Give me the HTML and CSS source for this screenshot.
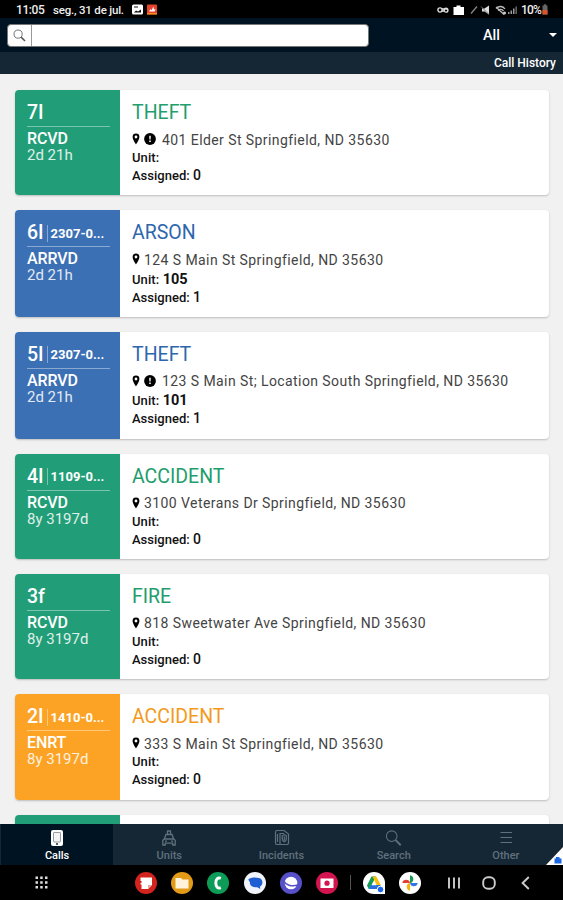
FILE: index.html
```html
<!DOCTYPE html>
<html lang="en">
<head>
    <meta charset="UTF-8">
    <meta name="viewport" content="width=device-width, initial-scale=1.0">
    <title>Calls</title>
    <link rel="stylesheet" href="styles.css">
</head>
<body>
    <!-- Shared icons -->
    <svg class="sprite">
        <symbol id="pin" viewBox="0 0 8 12">
            <path fill-rule="evenodd" d="M4 .5A3.4 3.4 0 0 0 .6 3.9C.6 6.4 4 11.3 4 11.3S7.4 6.4 7.4 3.9A3.4 3.4 0 0 0 4 .5zM4 2.6a1.4 1.4 0 1 1 0 2.8 1.4 1.4 0 0 1 0-2.8z"/>
        </symbol>
        <symbol id="alert" viewBox="0 0 12 12">
            <circle cx="6" cy="6" r="5.9"/>
            <path fill="#fff" d="M5.200 2.800h1.600l-.2 3.700H5.400zM5.200 7.500h1.600v1.400H5.200z"/>
        </symbol>
        <symbol id="magnifier" viewBox="0 0 16 16">
            <g fill="none" stroke="currentColor">
                <circle cx="6.3" cy="6.3" r="5"/>
                <path stroke-width="1.8" d="M10 10l4.8 4.8"/>
            </g>
        </symbol>
    </svg>

    <div class="screen">
        <div class="status-bar">
            <span class="clock">11:05</span>
            <span class="date">seg., 31 de jul.</span>
            <svg class="status-left" width="26" height="11" viewBox="0 0 26 11">
                <rect x="0" y=".5" width="11" height="10" rx="1.5" fill="#fff"/>
                <path d="M2 8.500l2-2 2 1 3-2V8.500z" fill="#111"/>
                <path d="M2 2.500h4v1H2z" fill="#111"/>
                <rect x="15" y=".5" width="10" height="10" rx="1" fill="#e8412c"/>
                <path d="M17 7.600l1.500-2.600 1.200 1.200 1.600-3.700.8 3 1.500-.5-1 2.600z" fill="#fff"/>
                <path d="M15 9h10v1.500H15z" fill="#f58a1f"/>
            </svg>
            <svg class="status-right" width="82" height="12" viewBox="0 0 82 12">
                <g fill="none" stroke="#ddd" stroke-width="1.400">
                    <circle cx="3" cy="6" r="2.100"/>
                    <path d="M5 5h5M5 7h2.500"/>
                    <circle cx="9" cy="6.200" r="1.900"/>
                </g>
                <path d="M17 3h2.500V1.400h4V3H27v8H16.500V3z" fill="#fff"/>
                <path d="M34 9.500l6-7" stroke="#888" stroke-width="1.300"/>
                <path d="M45 4.500h2.500l4.500-3v9l-4.500-3H45z" fill="#ddd"/>
                <path d="M44 2.500l8 8" stroke="#777"/>
                <path d="M59 4.500c3-3 7-2.500 9 .5M61 6.500c1.500-1.500 4-1.500 5.500.5M59 3l8 7.500" stroke="#bbb" stroke-width="1.300" fill="none"/>
                <circle cx="67.500" cy="9" r="1.500" fill="#ccc"/>
                <path d="M71 10V8h1.500v2zM73.500 10V6.500H75V10zM76 10V4.500h1.500V10z" fill="#999"/>
                <path d="M78.500 10V2.500h1.300V10z" fill="#777"/>
            </svg>
            <span class="percent">10%</span>
            <svg width="6" height="11" viewBox="0 0 6 11">
                <path d="M.5 1.500h1.300V.3h2.400v1.200h1.300V10.500H.5z" fill="#666"/>
                <path d="M.5 6h5v4.500h-5z" fill="#d9532c"/>
            </svg>
        </div>

        <header class="header">
            <div class="search-box">
                <span class="search-icon"><svg width="13" height="13"><use href="#magnifier"/></svg></span>
            </div>
            <span class="filter">All</span>
            <span class="caret"></span>
        </header>
        <div class="sub-header">Call History</div>

        <main class="calls">
            <article class="card green">
                <div class="side">
                    <div class="number"><b>7I</b></div>
                    <div class="state">RCVD</div>
                    <div class="age">2d 21h</div>
                </div>
                <div class="info">
                    <h2>THEFT</h2>
                    <p class="address"><svg class="pin"><use href="#pin"/></svg><svg class="alert"><use href="#alert"/></svg><span>401 Elder St Springfield, ND 35630</span></p>
                    <p class="unit">Unit:</p>
                    <p class="assigned">Assigned: <b>0</b></p>
                </div>
            </article>

            <article class="card blue">
                <div class="side">
                    <div class="number"><b>6I</b><span>2307-0...</span></div>
                    <div class="state">ARRVD</div>
                    <div class="age">2d 21h</div>
                </div>
                <div class="info">
                    <h2>ARSON</h2>
                    <p class="address"><svg class="pin"><use href="#pin"/></svg><span>124 S Main St Springfield, ND 35630</span></p>
                    <p class="unit">Unit: <b>105</b></p>
                    <p class="assigned">Assigned: <b>1</b></p>
                </div>
            </article>

            <article class="card blue">
                <div class="side">
                    <div class="number"><b>5I</b><span>2307-0...</span></div>
                    <div class="state">ARRVD</div>
                    <div class="age">2d 21h</div>
                </div>
                <div class="info">
                    <h2>THEFT</h2>
                    <p class="address"><svg class="pin"><use href="#pin"/></svg><svg class="alert"><use href="#alert"/></svg><span>123 S Main St; Location South Springfield, ND 35630</span></p>
                    <p class="unit">Unit: <b>101</b></p>
                    <p class="assigned">Assigned: <b>1</b></p>
                </div>
            </article>

            <article class="card green">
                <div class="side">
                    <div class="number"><b>4I</b><span>1109-0...</span></div>
                    <div class="state">RCVD</div>
                    <div class="age">8y 3197d</div>
                </div>
                <div class="info">
                    <h2>ACCIDENT</h2>
                    <p class="address"><svg class="pin"><use href="#pin"/></svg><span>3100 Veterans Dr Springfield, ND 35630</span></p>
                    <p class="unit">Unit:</p>
                    <p class="assigned">Assigned: <b>0</b></p>
                </div>
            </article>

            <article class="card green">
                <div class="side">
                    <div class="number"><b>3f</b></div>
                    <div class="state">RCVD</div>
                    <div class="age">8y 3197d</div>
                </div>
                <div class="info">
                    <h2>FIRE</h2>
                    <p class="address"><svg class="pin"><use href="#pin"/></svg><span>818 Sweetwater Ave Springfield, ND 35630</span></p>
                    <p class="unit">Unit:</p>
                    <p class="assigned">Assigned: <b>0</b></p>
                </div>
            </article>

            <article class="card orange">
                <div class="side">
                    <div class="number"><b>2I</b><span>1410-0...</span></div>
                    <div class="state">ENRT</div>
                    <div class="age">8y 3197d</div>
                </div>
                <div class="info">
                    <h2>ACCIDENT</h2>
                    <p class="address"><svg class="pin"><use href="#pin"/></svg><span>333 S Main St Springfield, ND 35630</span></p>
                    <p class="unit">Unit:</p>
                    <p class="assigned">Assigned: <b>0</b></p>
                </div>
            </article>

            <article class="card green">
                <div class="side"></div>
                <div class="info"></div>
            </article>
        </main>

        <nav class="tabs">
            <a class="tab active">
                <svg width="18" height="18" viewBox="0 0 18 18">
                    <rect x="3" y="1" width="12" height="16" rx="2" fill="#fff"/>
                    <rect x="5.500" y="3.500" width="7" height="9.500" rx=".5" fill="#f4f4f4" stroke="#8a9299" stroke-width=".9"/>
                    <circle cx="9" cy="15" r=".9" fill="#001322"/>
                </svg>
                <span>Calls</span>
            </a>
            <a class="tab">
                <svg width="18" height="18" viewBox="0 0 18 18" fill="none" stroke="currentColor" stroke-width="1.300">
                    <path d="M7.500 5V2h3v3M6 5.500h6l1.700 4.500 1.500 1.200v4.800h-2.500v-1.800H5.300V16H2.800v-4.800L4.300 10zM4.300 10h9.400"/>
                    <path d="M5 12.200h2M11 12.200h2"/>
                </svg>
                <span>Units</span>
            </a>
            <a class="tab">
                <svg width="18" height="18" viewBox="0 0 18 18" fill="none" stroke="currentColor" stroke-width="1.200">
                    <path d="M7 15.500H4a1.500 1.500 0 0 1-1.500-1.500V3A1.500 1.500 0 0 1 4 1.500h7L15.500 5v9a1.500 1.500 0 0 1-1.500 1.500H7V4.500h4"/>
                    <path d="M9.300 6.500c1 0 1.500-.3 2-.8.500.5 1 .8 2 .8v3.500c0 1.500-1 2.300-2 2.800-1-.5-2-1.300-2-2.800zM11.300 7.500v4M4.500 5v8"/>
                </svg>
                <span>Incidents</span>
            </a>
            <a class="tab">
                <svg width="17" height="18" viewBox="0 0 16 16"><use href="#magnifier"/></svg>
                <span>Search</span>
            </a>
            <a class="tab">
                <svg width="18" height="18" viewBox="0 0 18 18">
                    <path d="M3.500 3.500h11.500M3.500 8.500h11.500M3.500 13.500h11.500" stroke="currentColor" stroke-width="1.200"/>
                </svg>
                <span>Other</span>
            </a>
            <svg class="corner" width="17" height="18" viewBox="0 0 17 18">
                <path d="M17 0v18H0z" fill="#fff"/>
                <path d="M8.500 11.500H10V10h3.500v1.500H15.500V16.500h-7z" fill="#1e66e0"/>
            </svg>
        </nav>

        <!-- System navigation -->
        <div class="system-bar">
            <svg class="grid" width="13" height="13" viewBox="0 0 13 13" fill="#ddd">
                <path d="M.5.500h2.500V3H.5zM5.200.500h2.500V3H5.200zM10 .5h2.500V3H10zM.5 5.200h2.500v2.500H.5zM5.200 5.200h2.500v2.500H5.200zM10 5.200h2.500v2.500H10zM.5 10h2.500v2.500H.5zM5.200 10h2.500v2.500H5.200zM10 10h2.500v2.500H10z"/>
            </svg>
            <svg class="app" viewBox="0 0 22 22">
                <circle cx="11" cy="11" r="11" fill="#d2231f"/>
                <path d="M5.500 5.500h11.500v7.500l-4 4H6.500v-4.500h-1v-1.500h1V9h-1z" fill="#fff"/>
                <path d="M13 17v-4h4z" fill="#e9a5a3"/>
            </svg>
            <svg class="app" viewBox="0 0 22 22">
                <circle cx="11" cy="11" r="11" fill="#e39a17"/>
                <path d="M4.500 6h5.500l1.500 1.500h6V16.500h-13z" fill="#fff3dc"/>
            </svg>
            <svg class="app" viewBox="0 0 22 22">
                <circle cx="11" cy="11" r="11" fill="#0c9c57"/>
                <path d="M13.800 6.300C10.800 5 8.800 7.500 8.800 11s2 6 5 4.700" fill="none" stroke="#fff" stroke-width="2.900"/>
            </svg>
            <svg class="app" viewBox="0 0 22 22">
                <circle cx="11" cy="11" r="11" fill="#f1f4fb"/>
                <path d="M4.300 7.500C7 4.800 15.500 5 17.500 7.500c2 3 .5 6-1.500 7l.3 2.500-3-1.700C8 15.500 5.500 13.500 6 10.500z" fill="#1f5fd3"/>
            </svg>
            <svg class="app" viewBox="0 0 22 22">
                <circle cx="11" cy="11" r="11" fill="#5750c9"/>
                <circle cx="11" cy="11" r="6.300" fill="#fff"/>
                <path d="M3.500 8.500c2 4.500 8 6.500 14.500 4.500" fill="none" stroke="#5750c9" stroke-width="1.600"/>
            </svg>
            <svg class="app" viewBox="0 0 22 22">
                <circle cx="11" cy="11" r="11" fill="#d3144f"/>
                <path d="M4.500 6.500h13v9.500h-13z" fill="#fff"/>
                <circle cx="11" cy="11.200" r="2.600" fill="#d3144f"/>
            </svg>
            <span class="divider"></span>
            <svg class="app" viewBox="0 0 22 22">
                <path d="M11 0a11 11 0 0 1 11 11v11H11A11 11 0 0 1 11 0z" fill="#fff"/>
                <path d="M8.500 4.500h4.500L8 14l-2.300 3L4 13.500z" fill="#139b51"/>
                <path d="M9.500 4.500h3.800l4.500 8.500h-4.200z" fill="#fbbc0a"/>
                <path d="M8 13h9.800l-2.300 4H5.700z" fill="#2670e0"/>
                <path d="M11 9.500l2.300 3.700H8.800z" fill="#fff"/>
                <circle cx="17.500" cy="17.500" r="3.300" fill="#1c67e8" stroke="#fff"/>
            </svg>
            <svg class="app" viewBox="0 0 22 22">
                <circle cx="11" cy="11" r="11" fill="#fff"/>
                <path d="M11 11V3.300a3.900 3.900 0 0 1 0 7.700z" fill="#1a9a50"/>
                <path d="M11 11h7.700a3.900 3.900 0 0 1-7.700 0z" fill="#2f76e4"/>
                <path d="M11 11v7.700a3.900 3.900 0 0 1 0-7.700z" fill="#f5b40b"/>
                <path d="M11 11H3.300a3.900 3.900 0 0 1 7.700 0z" fill="#e3402f"/>
            </svg>
            <svg class="recents" width="12" height="12" viewBox="0 0 12 12">
                <path d="M1 .5v11M6 .5v11M11 .5v11" stroke="#ccc" stroke-width="1.900"/>
            </svg>
            <svg class="home" width="14" height="14" viewBox="0 0 14 14">
                <rect x="1.200" y="1.200" width="11.600" height="11.600" rx="4.800" fill="none" stroke="#ccc" stroke-width="1.900"/>
            </svg>
            <svg class="back" width="9" height="14" viewBox="0 0 9 14">
                <path d="M7.800 1L1.600 7l6.200 6" fill="none" stroke="#ccc" stroke-width="1.900"/>
            </svg>
        </div>
    </div>
</body>
</html>
```

FILE: styles.css
```css
* {
    margin: 0;
    padding: 0;
    box-sizing: border-box;
}

body {
    font-family: Roboto, 'Liberation Sans', sans-serif;
    background-color: #f1f1f1;
    overflow: hidden;
}

svg {
    display: block;
    flex-shrink: 0;
}

.sprite {
    display: none;
}

.screen {
    display: flex;
    flex-direction: column;
    width: 563px;
    height: 900px;
}

/* Status bar */
.status-bar {
    display: flex;
    align-items: center;
    height: 18px;
    padding: 1px 15px 0 16px;
    background-color: #000;
    color: #eee;
    font-size: 12px;
    font-weight: 500;
    flex-shrink: 0;
    white-space: nowrap;
}

.clock {
    width: 37px;
    letter-spacing: -0.4px;
}

.date {
    width: 79px;
    font-size: 11.5px;
    letter-spacing: -0.2px;
}

.status-right {
    margin-left: auto;
}

.percent {
    margin: 0 1px 0 2px;
    letter-spacing: -0.8px;
}

/* Header */
.header {
    display: flex;
    align-items: center;
    height: 34px;
    padding: 0 6px 0 7px;
    background-color: #001322;
    color: #fff;
    flex-shrink: 0;
}

.search-box {
    width: 362px;
    height: 23px;
    background-color: #fff;
    border: 1px solid #777;
    border-radius: 4px;
}

.search-icon {
    display: flex;
    align-items: center;
    justify-content: center;
    width: 24px;
    height: 21px;
    border-right: 1px solid #999;
    color: #555;
}

.filter {
    margin-left: 114px;
    font-size: 14.5px;
    font-weight: 500;
}

.caret {
    margin-left: auto;
    border: 4px solid transparent;
    border-top-color: #fff;
    border-bottom: 0;
}

.sub-header {
    height: 22px;
    padding-right: 7px;
    background-color: #152735;
    color: #fff;
    font-size: 12px;
    font-weight: 500;
    line-height: 22px;
    text-align: right;
    flex-shrink: 0;
}

/* Call list */
.calls {
    display: flex;
    flex-direction: column;
    gap: 15px;
    flex: 1;
    min-height: 0;
    padding: 16px 14px 0 15px;
    overflow: hidden;
}

.card {
    display: flex;
    height: 105.3px;
    flex-shrink: 0;
    background-color: #fff;
    border-radius: 4px;
    box-shadow: 0 1px 2px rgba(0, 0, 0, 0.22);
    overflow: hidden;
}

.card.blue {
    height: 106.7px;
}

.side {
    width: 105px;
    padding: 10px 10px 0 12px;
    color: #fff;
    flex-shrink: 0;
}

.green .side {
    background-color: #219e78;
}

.blue .side {
    background-color: #3c70b4;
}

.orange .side {
    background-color: #fca326;
}

.number {
    display: flex;
    align-items: center;
    height: 27px;
    padding-top: 1px;
    padding-bottom: 1px;
    border-bottom: 1px solid rgba(255, 255, 255, 0.4);
    font-size: 19.5px;
    line-height: 24px;
}

.number b {
    font-weight: 500;
}

.number span {
    margin-left: 3px;
    padding-left: 3px;
    border-left: 1px solid rgba(255, 255, 255, 0.4);
    font-size: 13px;
    font-weight: 700;
    line-height: 17px;
    white-space: nowrap;
}

.state {
    margin-top: 3px;
    font-size: 16px;
    font-weight: 500;
    line-height: 18px;
    letter-spacing: -0.1px;
}

.age {
    font-size: 15px;
    line-height: 15px;
    opacity: 0.85;
}

.info {
    flex: 1;
    padding: 11px 12px 0;
    color: #111;
}

.info h2 {
    font-size: 19.5px;
    font-weight: 400;
    line-height: 24px;
}

.green h2 {
    color: #219e6c;
}

.blue h2 {
    color: #2e66ae;
}

.orange h2 {
    color: #f39a1c;
}

.address {
    display: flex;
    align-items: center;
    height: 20px;
    margin-top: 4px;
    color: #444;
    font-size: 14px;
    white-space: nowrap;
    letter-spacing: 0.42px;
}

.address span {
    padding-top: 1px;
}

.pin {
    width: 8px;
    height: 12px;
    fill: #000;
    margin-right: 4px;
}

.alert {
    width: 12px;
    height: 12px;
    fill: #000;
    margin-right: 6px;
}

.unit,
.assigned {
    font-size: 13px;
    font-weight: 500;
    line-height: 18px;
}

.unit {
    letter-spacing: 0.1px;
}

.blue .unit {
    padding-top: 1.5px;
}

.unit b {
    font-size: 14.5px;
    font-weight: 700;
    line-height: 1;
    letter-spacing: 0;
}

.assigned b {
    font-size: 14px;
    font-weight: 500;
    line-height: 1;
}

/* Bottom tabs */
.tabs {
    position: relative;
    display: flex;
    height: 41px;
    padding: 0 1px;
    background-color: #152735;
    flex-shrink: 0;
}

.tab {
    display: flex;
    flex-direction: column;
    align-items: center;
    flex: 1;
    padding-top: 5px;
    color: #60707c;
    font-size: 11px;
    font-weight: 500;
    line-height: 17px;
}

.tab.active {
    background-color: #001322;
    color: #fff;
}

.corner {
    position: absolute;
    right: 0;
    bottom: 0;
}

.system-bar {
    display: flex;
    align-items: center;
    height: 35px;
    padding: 0 33px 0 35px;
    background-color: #000;
    flex-shrink: 0;
}

.grid {
    margin-right: 87px;
}

.app {
    width: 22px;
    height: 22px;
    margin-right: 14.2px;
}

.divider {
    width: 1px;
    height: 15px;
    margin: 0 12px 0 -2px;
    background-color: #555;
}

.recents {
    margin-left: auto;
}

.home {
    margin: 0 25px 0 22px;
}
```
